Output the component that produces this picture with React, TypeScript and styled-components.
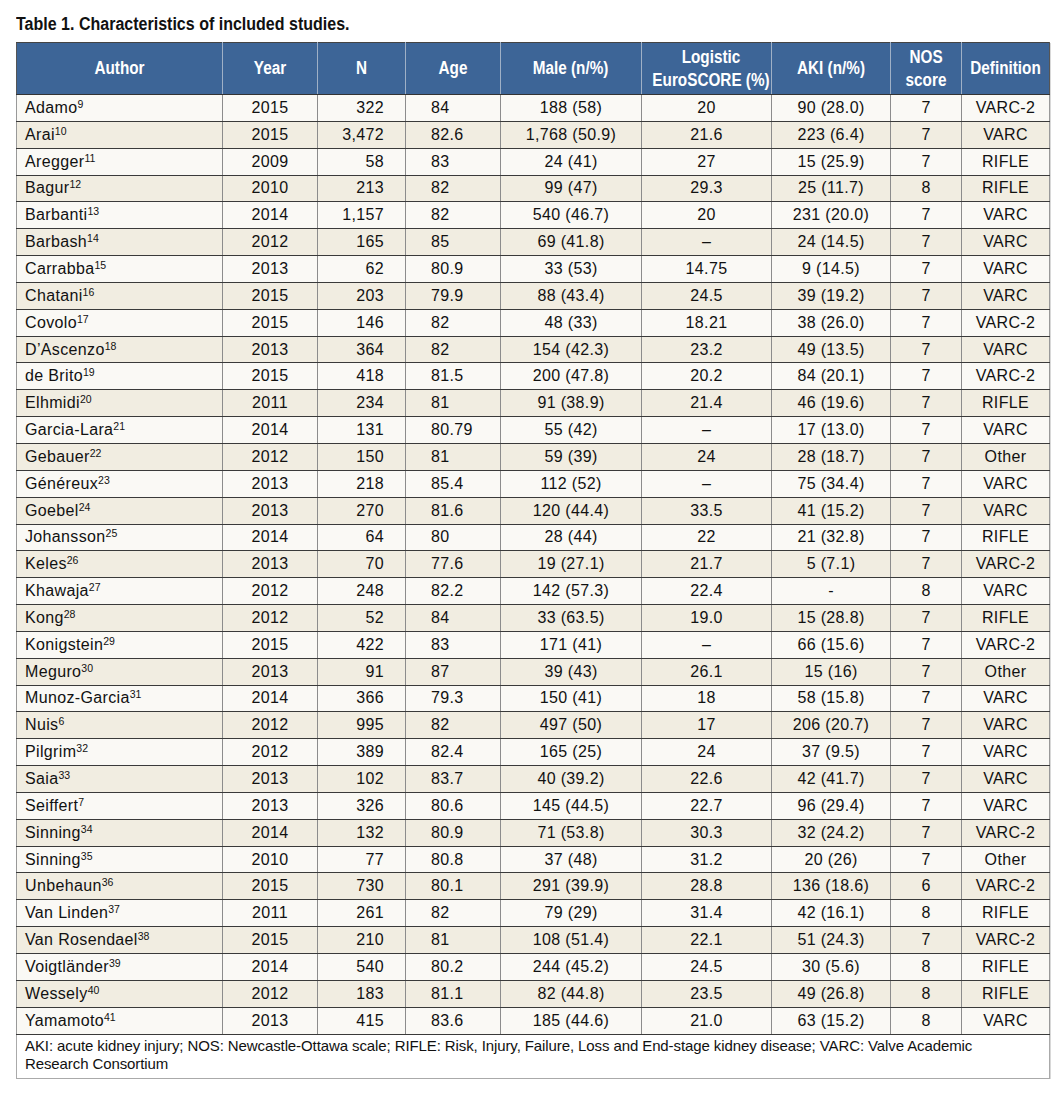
import styled, { createGlobalStyle } from 'styled-components';

type Study = [string, string, string, string, string, string, string, string, string, string];

// author, ref, year, n, age, male, euroscore, aki, nos, definition
const studies: Study[] = [
  ['Adamo', '9', '2015', '322', '84', '188 (58)', '20', '90 (28.0)', '7', 'VARC-2'],
  ['Arai', '10', '2015', '3,472', '82.6', '1,768 (50.9)', '21.6', '223 (6.4)', '7', 'VARC'],
  ['Aregger', '11', '2009', '58', '83', '24 (41)', '27', '15 (25.9)', '7', 'RIFLE'],
  ['Bagur', '12', '2010', '213', '82', '99 (47)', '29.3', '25 (11.7)', '8', 'RIFLE'],
  ['Barbanti', '13', '2014', '1,157', '82', '540 (46.7)', '20', '231 (20.0)', '7', 'VARC'],
  ['Barbash', '14', '2012', '165', '85', '69 (41.8)', '–', '24 (14.5)', '7', 'VARC'],
  ['Carrabba', '15', '2013', '62', '80.9', '33 (53)', '14.75', '9 (14.5)', '7', 'VARC'],
  ['Chatani', '16', '2015', '203', '79.9', '88 (43.4)', '24.5', '39 (19.2)', '7', 'VARC'],
  ['Covolo', '17', '2015', '146', '82', '48 (33)', '18.21', '38 (26.0)', '7', 'VARC-2'],
  ['D’Ascenzo', '18', '2013', '364', '82', '154 (42.3)', '23.2', '49 (13.5)', '7', 'VARC'],
  ['de Brito', '19', '2015', '418', '81.5', '200 (47.8)', '20.2', '84 (20.1)', '7', 'VARC-2'],
  ['Elhmidi', '20', '2011', '234', '81', '91 (38.9)', '21.4', '46 (19.6)', '7', 'RIFLE'],
  ['Garcia-Lara', '21', '2014', '131', '80.79', '55 (42)', '–', '17 (13.0)', '7', 'VARC'],
  ['Gebauer', '22', '2012', '150', '81', '59 (39)', '24', '28 (18.7)', '7', 'Other'],
  ['Généreux', '23', '2013', '218', '85.4', '112 (52)', '–', '75 (34.4)', '7', 'VARC'],
  ['Goebel', '24', '2013', '270', '81.6', '120 (44.4)', '33.5', '41 (15.2)', '7', 'VARC'],
  ['Johansson', '25', '2014', '64', '80', '28 (44)', '22', '21 (32.8)', '7', 'RIFLE'],
  ['Keles', '26', '2013', '70', '77.6', '19 (27.1)', '21.7', '5 (7.1)', '7', 'VARC-2'],
  ['Khawaja', '27', '2012', '248', '82.2', '142 (57.3)', '22.4', '-', '8', 'VARC'],
  ['Kong', '28', '2012', '52', '84', '33 (63.5)', '19.0', '15 (28.8)', '7', 'RIFLE'],
  ['Konigstein', '29', '2015', '422', '83', '171 (41)', '–', '66 (15.6)', '7', 'VARC-2'],
  ['Meguro', '30', '2013', '91', '87', '39 (43)', '26.1', '15 (16)', '7', 'Other'],
  ['Munoz-Garcia', '31', '2014', '366', '79.3', '150 (41)', '18', '58 (15.8)', '7', 'VARC'],
  ['Nuis', '6', '2012', '995', '82', '497 (50)', '17', '206 (20.7)', '7', 'VARC'],
  ['Pilgrim', '32', '2012', '389', '82.4', '165 (25)', '24', '37 (9.5)', '7', 'VARC'],
  ['Saia', '33', '2013', '102', '83.7', '40 (39.2)', '22.6', '42 (41.7)', '7', 'VARC'],
  ['Seiffert', '7', '2013', '326', '80.6', '145 (44.5)', '22.7', '96 (29.4)', '7', 'VARC'],
  ['Sinning', '34', '2014', '132', '80.9', '71 (53.8)', '30.3', '32 (24.2)', '7', 'VARC-2'],
  ['Sinning', '35', '2010', '77', '80.8', '37 (48)', '31.2', '20 (26)', '7', 'Other'],
  ['Unbehaun', '36', '2015', '730', '80.1', '291 (39.9)', '28.8', '136 (18.6)', '6', 'VARC-2'],
  ['Van Linden', '37', '2011', '261', '82', '79 (29)', '31.4', '42 (16.1)', '8', 'RIFLE'],
  ['Van Rosendael', '38', '2015', '210', '81', '108 (51.4)', '22.1', '51 (24.3)', '7', 'VARC-2'],
  ['Voigtländer', '39', '2014', '540', '80.2', '244 (45.2)', '24.5', '30 (5.6)', '8', 'RIFLE'],
  ['Wessely', '40', '2012', '183', '81.1', '82 (44.8)', '23.5', '49 (26.8)', '8', 'RIFLE'],
  ['Yamamoto', '41', '2013', '415', '83.6', '185 (44.6)', '21.0', '63 (15.2)', '8', 'VARC'],
];

type Align = 'left' | 'center' | 'right';

const columns: { width: number; align: Align; pad: string }[] = [
  { width: 206, align: 'left', pad: '0 0 0 8px' },
  { width: 95, align: 'center', pad: '0' },
  { width: 88, align: 'right', pad: '0 21px 0 0' },
  { width: 95, align: 'left', pad: '0 0 0 25px' },
  { width: 141, align: 'center', pad: '0' },
  { width: 130, align: 'center', pad: '0' },
  { width: 119, align: 'center', pad: '0' },
  { width: 71, align: 'center', pad: '0' },
  { width: 88, align: 'center', pad: '0' },
];

const headings: string[][] = [
  ['Author'],
  ['Year'],
  ['N'],
  ['Age'],
  ['Male (n/%)'],
  ['Logistic', 'EuroSCORE (%)'],
  ['AKI (n/%)'],
  ['NOS', 'score'],
  ['Definition'],
];

export default function App() {
  return (
    <>
      <GlobalStyle />
      <Page>
        <Title>
          <Narrow $scale={0.89} $origin="left">Table 1. Characteristics of included studies.</Narrow>
        </Title>
        <Table>
          <colgroup>
            {columns.map((c, i) => (
              <col key={i} style={{ width: c.width }} />
            ))}
          </colgroup>
          <thead>
            <tr>
              {headings.map((lines, i) => (
                <Th key={i}>
                  <Narrow $scale={0.85} $origin="center">
                    {lines.map((l, j) => (
                      <span key={j}>
                        {j > 0 && <br />}
                        {l}
                      </span>
                    ))}
                  </Narrow>
                </Th>
              ))}
            </tr>
          </thead>
          <tbody>
            {studies.map((s, r) => (
              <Row key={r} $shaded={r % 2 === 1}>
                <Td $align="left" $pad={columns[0].pad}>
                  {s[0]}
                  <Ref>{s[1]}</Ref>
                </Td>
                {s.slice(2).map((v, i) => (
                  <Td key={i} $align={columns[i + 1].align} $pad={columns[i + 1].pad}>
                    {v}
                  </Td>
                ))}
              </Row>
            ))}
            <tr>
              <Footnote colSpan={9}>
                AKI: acute kidney injury; NOS: Newcastle-Ottawa scale; RIFLE: Risk, Injury, Failure, Loss and
                End-stage kidney disease; VARC: Valve Academic Research Consortium
              </Footnote>
            </tr>
          </tbody>
        </Table>
      </Page>
    </>
  );
}

// Styles
const GlobalStyle = createGlobalStyle`
    html, body {
        margin: 0;
        padding: 0;
        background: #ffffff;
    }
`;

const Page = styled.div`
    padding: 14px 13px 0 16px;
    width: 1033px;
`;

// no condensed face is installed, so the bold headings are narrowed by hand
const Narrow = styled.span<{ $scale: number; $origin: string }>`
    display: inline-block;
    white-space: nowrap;
    transform: scaleX(${({ $scale }) => $scale});
    transform-origin: ${({ $origin }) => $origin} center;
`;

const Title = styled.div`
    font-family: "Liberation Sans", Arial, sans-serif;
    font-weight: bold;
    font-size: 18px;
    line-height: 20px;
    color: #111;
    margin-bottom: 8px;
`;

const Table = styled.table`
    width: 1033px;
    table-layout: fixed;
    border-collapse: collapse;
    font-family: "Liberation Sans", Arial, sans-serif;
    font-size: 16px;
    letter-spacing: 0.35px;
    color: #111;
    box-shadow: 1px 1px 0 #d8d8d8;
`;

const Th = styled.th`
    height: 51px;
    padding: 0;
    background: #3d6597;
    color: #ffffff;
    font-weight: bold;
    font-size: 18px;
    line-height: 23px;
    letter-spacing: 0;
    text-align: center;
    border: 1px solid #9fb0c6;
    border-top-color: #444;
    border-bottom-color: #333;
    &:first-child {
        border-left-color: #555;
    }
    &:last-child {
        border-right-color: #555;
    }
`;

const Row = styled.tr<{ $shaded: boolean }>`
    height: 26.85px;
    background: ${({ $shaded }) => ($shaded ? '#f1ede1' : '#faf9f5')};
`;

const Td = styled.td<{ $align: Align; $pad: string }>`
    padding: ${({ $pad }) => $pad};
    text-align: ${({ $align }) => $align};
    white-space: nowrap;
    border-top: 1px solid #3a3a3a;
    border-bottom: 1px solid #3a3a3a;
    border-left: 1px solid #8c8c8c;
    border-right: 1px solid #8c8c8c;
    &:first-child {
        border-left-color: #999;
    }
    &:last-child {
        border-right-color: #999;
    }
`;

const Ref = styled.sup`
    font-size: 10.5px;
    letter-spacing: 0;
    vertical-align: 5px;
    line-height: 0;
`;

const Footnote = styled.td`
    height: 39px;
    padding: 2px 60px 2px 8px;
    background: #ffffff;
    border: 1px solid #aaaaaa;
    border-top: 1px solid #3a3a3a;
    font-size: 15px;
    line-height: 18px;
    letter-spacing: -0.1px;
    text-align: left;
    vertical-align: top;
`;
